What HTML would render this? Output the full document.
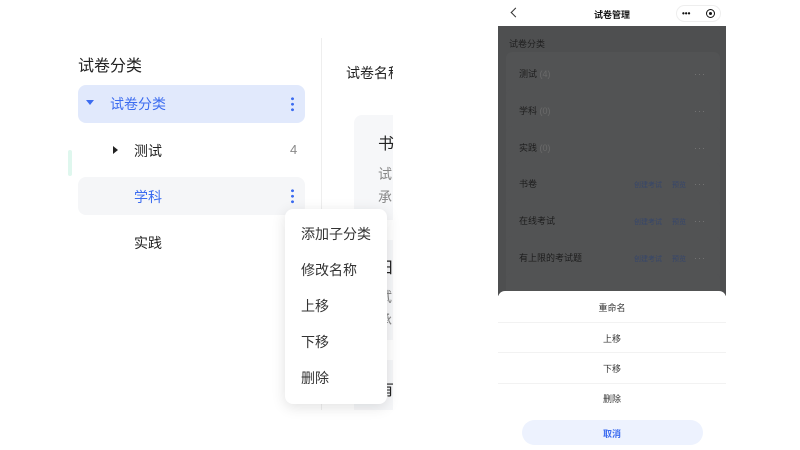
<!DOCTYPE html>
<html><head><meta charset="utf-8"><style>
*{margin:0;padding:0;box-sizing:border-box}
body{width:800px;height:450px;background:#fff;position:relative;overflow:hidden;font-family:"Liberation Sans","Noto Sans CJK SC",sans-serif}
.a{position:absolute}
.t{font-size:14px;color:#222}
.phone-dark{background:#4e4f50}
.card{position:absolute;left:506px;width:214px;height:46px;background:#525354;border-radius:6px}
.ct{position:absolute;left:13px;top:17px;font-size:9px;line-height:11px;color:#1d1d1d}
.ct span{color:#6a6a6a}
.dots{position:absolute;right:14px;top:17px;font-size:9px;line-height:11px;color:#777;letter-spacing:1px}
.lk{position:absolute;top:19px;font-size:7px;line-height:9px;color:#36466b}
.sh{position:absolute;left:498px;width:228px;font-size:9px;color:#333;text-align:center}
.ln{position:absolute;left:498px;width:228px;height:1px;background:#f2f2f2}
</style></head><body>
<!-- left panel -->
<div class="a" style="left:78px;top:52px;font-size:16px;color:#222">试卷分类</div>
<div class="a" style="left:321px;top:38px;width:1px;height:372px;background:#eee"></div>
<div class="a" style="left:78px;top:85px;width:227px;height:38px;background:#e1e9fc;border-radius:8px"></div>
<div class="a" style="left:86px;top:100px;width:0;height:0;border-left:4px solid transparent;border-right:4px solid transparent;border-top:5px solid #3c6cf0"></div>
<div class="a" style="left:110px;top:94px;font-size:14px;color:#3c6cf0">试卷分类</div>
<div class="a" style="left:291px;top:96px;width:3px;height:16px;background:radial-gradient(circle,#3c6cf0 1.3px,transparent 1.6px) 0 0/3px 5.5px"></div>
<div class="a" style="left:113px;top:146px;width:0;height:0;border-top:4px solid transparent;border-bottom:4px solid transparent;border-left:5px solid #222"></div>
<div class="a t" style="left:134px;top:141px">测试</div>
<div class="a" style="left:290px;top:142px;font-size:13px;color:#888">4</div>
<div class="a" style="left:78px;top:177px;width:227px;height:38px;background:#f5f6f8;border-radius:8px"></div>
<div class="a" style="left:134px;top:187px;font-size:14px;color:#3c6cf0">学科</div>
<div class="a" style="left:291px;top:188px;width:3px;height:16px;background:radial-gradient(circle,#3c6cf0 1.3px,transparent 1.6px) 0 0/3px 5.5px"></div>
<div class="a t" style="left:134px;top:233px">实践</div>
<div class="a" style="left:346px;top:63px;font-size:14px;color:#222;width:47px;overflow:hidden;white-space:nowrap">试卷名称</div>
<div class="a" style="left:354px;top:115px;width:39px;height:105px;background:#f6f7f9;border-radius:8px 0 0 8px"></div>
<div class="a" style="left:378px;top:130px;font-size:16px;color:#222">书</div>
<div class="a" style="left:378px;top:164px;font-size:14px;color:#888">试</div>
<div class="a" style="left:378px;top:187px;font-size:14px;color:#888">承</div>
<div class="a" style="left:354px;top:240px;width:39px;height:100px;background:#f6f7f9"></div>
<div class="a" style="left:378px;top:254px;font-size:16px;color:#222">日</div>
<div class="a" style="left:378px;top:287px;font-size:14px;color:#888">试</div>
<div class="a" style="left:378px;top:310px;font-size:14px;color:#888">承</div>
<div class="a" style="left:354px;top:360px;width:39px;height:50px;background:#f6f7f9"></div>
<div class="a" style="left:378px;top:376px;font-size:16px;color:#222">有</div>
<div class="a" style="left:285px;top:209px;width:102px;height:195px;background:#fff;border-radius:8px;box-shadow:0 3px 14px rgba(0,0,0,.12)"></div>
<div class="a" style="left:301px;top:216px;font-size:14px;color:#333;line-height:36px">添加子分类<br>修改名称<br>上移<br>下移<br>删除</div>
<div class="a" style="left:68px;top:150px;width:4px;height:26px;background:#dff7ee;border-radius:4px"></div>

<!-- phone -->
<div class="a" style="left:498px;top:0;width:228px;height:26px;background:#fff"></div>
<div class="a" style="left:512px;top:9px;width:7px;height:7px;border-left:1.2px solid #333;border-bottom:1.2px solid #333;transform:rotate(45deg)"></div>
<div class="a" style="left:594px;top:8px;font-size:9px;color:#111;font-weight:bold">试卷管理</div>
<div class="a" style="left:676px;top:5px;width:45px;height:17px;border:1px solid #eee;border-radius:9px"></div>
<div class="a" style="left:682px;top:9px;font-size:8px;color:#111;font-weight:bold">•••</div>
<div class="a" style="left:706px;top:9px;width:9px;height:9px;border:1.3px solid #111;border-radius:50%"></div>
<div class="a" style="left:709px;top:12px;width:3px;height:3px;background:#111;border-radius:50%"></div>
<div class="a phone-dark" style="left:498px;top:26px;width:228px;height:270px"></div>
<div class="a" style="left:509px;top:37px;font-size:9px;color:#1f1f1f">试卷分类</div>
<div class="card" style="top:52px"><div class="ct">测试 <span>(4)</span></div><div class="dots">···</div></div>
<div class="card" style="top:89px"><div class="ct">学科 <span>(0)</span></div><div class="dots">···</div></div>
<div class="card" style="top:126px"><div class="ct">实践 <span>(0)</span></div><div class="dots">···</div></div>
<div class="card" style="top:162px"><div class="ct">书卷</div><div class="lk" style="left:128px">创建考试</div><div class="lk" style="left:166px">预览</div><div class="dots">···</div></div>
<div class="card" style="top:199px"><div class="ct">在线考试</div><div class="lk" style="left:128px">创建考试</div><div class="lk" style="left:166px">预览</div><div class="dots">···</div></div>
<div class="card" style="top:236px"><div class="ct">有上限的考试题</div><div class="lk" style="left:128px">创建考试</div><div class="lk" style="left:166px">预览</div><div class="dots">···</div></div>
<div class="card" style="top:273px"></div>
<div class="a" style="left:498px;top:291px;width:228px;height:159px;background:#fff;border-radius:7px 7px 0 0"></div>
<div class="sh" style="top:301px">重命名</div>
<div class="ln" style="top:322px"></div>
<div class="sh" style="top:332px">上移</div>
<div class="ln" style="top:352px"></div>
<div class="sh" style="top:362px">下移</div>
<div class="ln" style="top:383px"></div>
<div class="sh" style="top:392px">删除</div>
<div class="a" style="left:522px;top:420px;width:181px;height:25px;background:#edf2fe;border-radius:13px"></div>
<div class="sh" style="top:427px;color:#3c6cf0;font-weight:bold">取消</div>
</body></html>
